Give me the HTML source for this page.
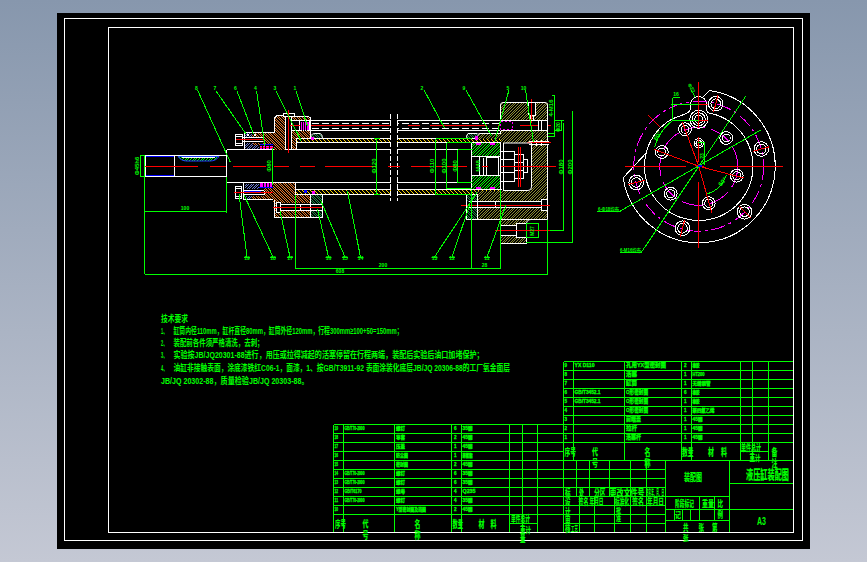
<!DOCTYPE html>
<html lang="zh"><head><meta charset="utf-8"><title>液压缸装配图</title>
<style>
html,body{margin:0;padding:0;}
body{width:867px;height:562px;overflow:hidden;background:linear-gradient(180deg,#8797ad 0%,#c4c8d4 100%);font-family:"Liberation Sans","Noto Sans CJK SC",sans-serif;}
svg{display:block;position:absolute;left:0;top:0;}
svg text{font-family:"Liberation Sans","Noto Sans CJK SC",sans-serif;}
</style></head><body>
<svg width="867" height="562" viewBox="0 0 867 562">
<defs>
<pattern id="hb" width="5" height="5" patternUnits="userSpaceOnUse"><rect width="5" height="5" fill="#000"/><path d="M0 0h1v1h-1zM2 0h1v1h-1zM1 1h1v1h-1zM3 1h1v1h-1zM2 2h1v1h-1zM4 2h1v1h-1zM0 3h1v1h-1zM3 3h1v1h-1zM1 4h1v1h-1zM4 4h1v1h-1z" fill="#e87828"/></pattern>
<pattern id="ho" width="8" height="8" patternUnits="userSpaceOnUse"><rect width="8" height="8" fill="#000"/><path d="M0 0h1v1h-1zM2 0h1v1h-1zM5 0h1v1h-1zM1 1h1v1h-1zM4 1h1v1h-1zM7 1h1v1h-1zM0 2h1v1h-1zM3 2h1v1h-1zM6 2h1v1h-1zM2 3h1v1h-1zM5 3h1v1h-1zM7 3h1v1h-1zM1 4h1v1h-1zM4 4h1v1h-1zM6 4h1v1h-1zM0 5h1v1h-1zM3 5h1v1h-1zM5 5h1v1h-1zM2 6h1v1h-1zM4 6h1v1h-1zM7 6h1v1h-1zM1 7h1v1h-1zM3 7h1v1h-1zM6 7h1v1h-1z" fill="#8c8c32"/></pattern>
<pattern id="hg" width="8" height="8" patternUnits="userSpaceOnUse"><rect width="8" height="8" fill="#000"/><path d="M0 0h1v1h-1zM2 0h1v1h-1zM5 0h1v1h-1zM1 1h1v1h-1zM4 1h1v1h-1zM7 1h1v1h-1zM0 2h1v1h-1zM3 2h1v1h-1zM6 2h1v1h-1zM2 3h1v1h-1zM5 3h1v1h-1zM7 3h1v1h-1zM1 4h1v1h-1zM4 4h1v1h-1zM6 4h1v1h-1zM0 5h1v1h-1zM3 5h1v1h-1zM5 5h1v1h-1zM2 6h1v1h-1zM4 6h1v1h-1zM7 6h1v1h-1zM1 7h1v1h-1zM3 7h1v1h-1zM6 7h1v1h-1z" fill="#00ff00"/></pattern>
<pattern id="hy" width="4" height="4" patternUnits="userSpaceOnUse"><rect width="4" height="4" fill="#000"/><path d="M0 0h1v1h-1zM1 1h1v1h-1zM2 2h1v1h-1zM3 3h1v1h-1z" fill="#ffd800"/></pattern>
<pattern id="hs" width="5" height="5" patternUnits="userSpaceOnUse"><rect width="5" height="5" fill="#000"/><path d="M0 0h1v1h-1zM2 0h1v1h-1zM1 1h1v1h-1zM4 1h1v1h-1zM0 2h1v1h-1zM3 2h1v1h-1zM2 3h1v1h-1zM4 3h1v1h-1zM1 4h1v1h-1zM3 4h1v1h-1z" fill="#6878d0"/></pattern>
<pattern id="hd" width="5" height="5" patternUnits="userSpaceOnUse"><rect width="5" height="5" fill="#000"/><path d="M0 0h1v1h-1zM2 0h1v1h-1zM1 1h1v1h-1zM3 1h1v1h-1zM2 2h1v1h-1zM4 2h1v1h-1zM0 3h1v1h-1zM3 3h1v1h-1zM1 4h1v1h-1zM4 4h1v1h-1z" fill="#208848"/></pattern>
</defs>
<g shape-rendering="crispEdges">
<rect x="57" y="13" width="753" height="536" fill="#000"/>
</g>
<g shape-rendering="crispEdges">
<rect x="145.5" y="155.5" width="81" height="21" stroke="#ffffff" fill="none" stroke-width="1" />
<line x1="174.5" y1="155.5" x2="174.5" y2="176.5" stroke="#ffffff" stroke-width="1" />
<line x1="146" y1="156.5" x2="174" y2="156.5" stroke="#0000ff" stroke-width="1" />
<line x1="146" y1="175.5" x2="174" y2="175.5" stroke="#0000ff" stroke-width="1" />
<path d="M178 156.5 Q181 161 187 161 L210 161 Q216 161 219 156.5 Z" fill="url(#hg)" stroke="#2040ff" stroke-width="1" shape-rendering="auto"/>
<line x1="182" y1="157.5" x2="215" y2="157.5" stroke="#ffffff" stroke-width="1" />
<line x1="226.5" y1="149.5" x2="471.5" y2="149.5" stroke="#ffffff" stroke-width="1" />
<line x1="226.5" y1="182.5" x2="471.5" y2="182.5" stroke="#ffffff" stroke-width="1" />
<line x1="226.5" y1="149.5" x2="226.5" y2="182.5" stroke="#ffffff" stroke-width="1" />
<rect x="296" y="139" width="206" height="3.5" fill="url(#hy)"/>
<line x1="296" y1="138.5" x2="502" y2="138.5" stroke="#ffffff" stroke-width="1" />
<line x1="296" y1="142.5" x2="502" y2="142.5" stroke="#ffffff" stroke-width="1" />
<rect x="296" y="190" width="206" height="4" fill="url(#hy)"/>
<line x1="296" y1="189.5" x2="502" y2="189.5" stroke="#ffffff" stroke-width="1" />
<line x1="296" y1="194.5" x2="502" y2="194.5" stroke="#ffffff" stroke-width="1" />
<line x1="310" y1="120.5" x2="500" y2="120.5" stroke="#ffffff" stroke-width="1" />
<line x1="310" y1="130.5" x2="500" y2="130.5" stroke="#ffffff" stroke-width="1" />
<line x1="312" y1="123.5" x2="500" y2="123.5" stroke="#ffffff" stroke-width="1" stroke-dasharray="7 3"/>
<line x1="312" y1="128.5" x2="500" y2="128.5" stroke="#ffffff" stroke-width="1" stroke-dasharray="7 3"/>
<line x1="300" y1="125.5" x2="390.5" y2="125.5" stroke="#ff0000" stroke-width="1" />
<line x1="408" y1="125.5" x2="419.5" y2="125.5" stroke="#ff0000" stroke-width="1" />
<line x1="429.5" y1="125.5" x2="487" y2="125.5" stroke="#ff0000" stroke-width="1" />
<line x1="498" y1="125.5" x2="512" y2="125.5" stroke="#ff0000" stroke-width="1" />
<line x1="519.5" y1="125.5" x2="551" y2="125.5" stroke="#ff0000" stroke-width="1" />
<rect x="245" y="133" width="29" height="16" fill="#000"/>
<rect x="245" y="133" width="6.5" height="4" fill="url(#hs)"/>
<rect x="252" y="133" width="22" height="4" fill="url(#hb)"/>
<rect x="263.5" y="133" width="10.5" height="11" fill="url(#hb)"/>
<rect x="245" y="143" width="14" height="6" fill="url(#hs)"/>
<rect x="253" y="143" width="7" height="1.5" fill="url(#hb)"/>
<rect x="247" y="134" width="2" height="2" fill="#ffffff"/>
<rect x="254" y="134" width="2" height="2" fill="#ffffff"/>
<rect x="235.5" y="134.5" width="7" height="11" stroke="#ffffff" fill="none" stroke-width="1" />
<line x1="236" y1="136.5" x2="242" y2="136.5" stroke="#ffffff" stroke-width="1" />
<line x1="236" y1="143.5" x2="242" y2="143.5" stroke="#ffffff" stroke-width="1" />
<line x1="244.5" y1="132.5" x2="274.5" y2="132.5" stroke="#ffffff" stroke-width="1" />
<line x1="244.5" y1="132.5" x2="244.5" y2="149.5" stroke="#ffffff" stroke-width="1" />
<line x1="243" y1="137.5" x2="263" y2="137.5" stroke="#ffffff" stroke-width="1" />
<line x1="243" y1="141.5" x2="263" y2="141.5" stroke="#ffffff" stroke-width="1" />
<line x1="263.5" y1="137.5" x2="263.5" y2="141.5" stroke="#ffffff" stroke-width="1" />
<line x1="259.5" y1="144.5" x2="273" y2="144.5" stroke="#0000ff" stroke-width="1" />
<rect x="259.5" y="145.5" width="13.5" height="3.5" fill="#ff00ff"/>
<line x1="259.5" y1="147.5" x2="273" y2="147.5" stroke="#ff0000" stroke-width="1" />
<line x1="262.5" y1="145.5" x2="262.5" y2="149" stroke="#000" stroke-width="1" />
<line x1="265.5" y1="145.5" x2="265.5" y2="149" stroke="#000" stroke-width="1" />
<line x1="269.5" y1="145.5" x2="269.5" y2="149" stroke="#000" stroke-width="1" />
<line x1="236" y1="139.5" x2="264" y2="139.5" stroke="#ff0000" stroke-width="1" />
<line x1="266.5" y1="139.5" x2="273.5" y2="139.5" stroke="#ff0000" stroke-width="1" />
<path d="M262.5 132.5 L274.5 132.5 L274.5 118 L277 115.5 L285.5 115.5 L285.5 149.5 L273.5 149.5 L273.5 143.5 L262.5 143.5 Z" stroke="none" fill="url(#hb)" stroke-width="1" />
<path d="M274.5 132.5 L274.5 118 L277 115.5 L285.5 115.5 L285.5 149.5" stroke="#ffffff" fill="none" stroke-width="1" />
<path d="M291.5 149.5 L291.5 116 L308 116 L310.5 118 L310.5 138.5 L296.5 138.5 L296.5 149.5 Z" stroke="#ffffff" fill="url(#hb)" stroke-width="1" />
<rect x="292" y="121" width="18" height="9.5" fill="#000"/>
<line x1="291.5" y1="120.5" x2="310.5" y2="120.5" stroke="#ffffff" stroke-width="1" />
<line x1="291.5" y1="130.5" x2="310.5" y2="130.5" stroke="#ffffff" stroke-width="1" />
<rect x="283.5" y="113.5" width="11" height="3" stroke="#ffffff" fill="#000" stroke-width="1" />
<rect x="300.5" y="121.5" width="8.5" height="8.5" fill="#ff00ff"/>
<line x1="302.5" y1="121" x2="302.5" y2="130.5" stroke="#000" stroke-width="1" />
<line x1="304.5" y1="121" x2="304.5" y2="130.5" stroke="#000" stroke-width="1" />
<line x1="306.5" y1="121" x2="306.5" y2="130.5" stroke="#000" stroke-width="1" />
<line x1="299.5" y1="120.5" x2="299.5" y2="130.5" stroke="#ffffff" stroke-width="1" />
<line x1="309.5" y1="120.5" x2="309.5" y2="130.5" stroke="#ffffff" stroke-width="1" />
<line x1="288.5" y1="110" x2="288.5" y2="153" stroke="#ff0000" stroke-width="1" />
<line x1="290" y1="125.5" x2="300" y2="125.5" stroke="#ff0000" stroke-width="1" />
<path d="M311 138.5 L311 135.5 Q312 133.5 315 133.5 L320 133.5 Q322.5 134 322.5 138.5 Z" fill="url(#hd)" stroke="#fff" stroke-width="1" shape-rendering="auto"/>
<rect x="311" y="137" width="3" height="3" fill="#ff00ff"/>
<rect x="244" y="183" width="29" height="17" fill="#000"/>
<rect x="245" y="183.5" width="14" height="5" fill="url(#hs)"/>
<rect x="264" y="186.5" width="9" height="13.5" fill="url(#hb)"/>
<rect x="245" y="195.5" width="6.5" height="4" fill="url(#hs)"/>
<rect x="252" y="195.5" width="21" height="4.5" fill="url(#hb)"/>
<rect x="235.5" y="186.5" width="6" height="12" stroke="#ffffff" fill="none" stroke-width="1" />
<line x1="236" y1="188.5" x2="241" y2="188.5" stroke="#ffffff" stroke-width="1" />
<line x1="236" y1="196.5" x2="241" y2="196.5" stroke="#ffffff" stroke-width="1" />
<line x1="243.5" y1="182.5" x2="243.5" y2="199.5" stroke="#ffffff" stroke-width="1" />
<line x1="243.5" y1="199.5" x2="295" y2="199.5" stroke="#ffffff" stroke-width="1" />
<line x1="244" y1="190.5" x2="264" y2="190.5" stroke="#ffffff" stroke-width="1" />
<line x1="244" y1="194.5" x2="264" y2="194.5" stroke="#ffffff" stroke-width="1" />
<line x1="264.5" y1="190.5" x2="264.5" y2="194.5" stroke="#ffffff" stroke-width="1" />
<line x1="244" y1="191.5" x2="261" y2="191.5" stroke="#0000ff" stroke-width="1" />
<rect x="260" y="183" width="12" height="3.5" fill="#ff00ff"/>
<line x1="263.5" y1="183" x2="263.5" y2="186.5" stroke="#000" stroke-width="1" />
<line x1="266.5" y1="183" x2="266.5" y2="186.5" stroke="#000" stroke-width="1" />
<line x1="269.5" y1="183" x2="269.5" y2="186.5" stroke="#000" stroke-width="1" />
<line x1="258.5" y1="187.5" x2="273" y2="187.5" stroke="#0000ff" stroke-width="1" />
<line x1="234" y1="192.5" x2="283" y2="192.5" stroke="#ff0000" stroke-width="1" />
<rect x="273" y="183" width="22.5" height="19.5" fill="url(#hb)"/>
<rect x="295.5" y="195" width="15" height="7.5" fill="url(#hb)"/>
<rect x="275" y="202.5" width="35.5" height="15" fill="url(#hb)"/>
<rect x="276" y="203" width="45" height="8" fill="#000"/>
<rect x="276.5" y="202.5" width="4" height="10" stroke="#ffffff" fill="#000" stroke-width="1" />
<line x1="280.5" y1="204.5" x2="321" y2="204.5" stroke="#ffffff" stroke-width="1" />
<line x1="280.5" y1="210.5" x2="321" y2="210.5" stroke="#ffffff" stroke-width="1" />
<line x1="300.5" y1="204.5" x2="300.5" y2="210.5" stroke="#ffffff" stroke-width="1" />
<line x1="273" y1="207.5" x2="322" y2="207.5" stroke="#ff0000" stroke-width="1" />
<line x1="274.5" y1="199.5" x2="274.5" y2="217.5" stroke="#ffffff" stroke-width="1" />
<line x1="274.5" y1="217.5" x2="322.5" y2="217.5" stroke="#ffffff" stroke-width="1" />
<line x1="295.5" y1="182.5" x2="295.5" y2="195" stroke="#ffffff" stroke-width="1" />
<rect x="311" y="195" width="11" height="22" fill="url(#hd)"/>
<rect x="311" y="204" width="11" height="7" fill="#000"/>
<line x1="311" y1="204.5" x2="322" y2="204.5" stroke="#ffffff" stroke-width="1" />
<line x1="311" y1="210.5" x2="322" y2="210.5" stroke="#ffffff" stroke-width="1" />
<rect x="310.5" y="194.5" width="12" height="23" stroke="#ffffff" fill="none" stroke-width="1" />
<rect x="303.5" y="190" width="3" height="3" fill="#0000ff"/>
<rect x="312" y="190.5" width="3" height="3.5" fill="#ff00ff"/>
<line x1="273" y1="207.5" x2="322" y2="207.5" stroke="#ff0000" stroke-width="1" />
<rect x="472" y="143" width="28" height="13.5" fill="url(#hg)"/>
<rect x="472" y="176" width="28" height="13" fill="url(#hg)"/>
<line x1="471.5" y1="142.5" x2="471.5" y2="189.5" stroke="#ffffff" stroke-width="1" />
<line x1="500.5" y1="142.5" x2="500.5" y2="189.5" stroke="#ffffff" stroke-width="1" />
<line x1="503.5" y1="143" x2="503.5" y2="190.5" stroke="#ffffff" stroke-width="1" />
<line x1="471.5" y1="156.5" x2="500.5" y2="156.5" stroke="#ffffff" stroke-width="1" />
<line x1="471.5" y1="175.5" x2="500.5" y2="175.5" stroke="#ffffff" stroke-width="1" />
<rect x="486.5" y="157.5" width="12" height="18" stroke="#ffffff" fill="none" stroke-width="1" />
<line x1="483.5" y1="157.5" x2="483.5" y2="175.5" stroke="#ffffff" stroke-width="1" />
<line x1="479.5" y1="156.5" x2="479.5" y2="175.5" stroke="#ffffff" stroke-width="1" />
<line x1="476" y1="143.5" x2="481" y2="143.5" stroke="#ff00ff" stroke-width="1" />
<line x1="476" y1="144.5" x2="481" y2="144.5" stroke="#ff00ff" stroke-width="1" />
<line x1="476" y1="187.5" x2="481" y2="187.5" stroke="#ff00ff" stroke-width="1" />
<line x1="476" y1="188.5" x2="481" y2="188.5" stroke="#ff00ff" stroke-width="1" />
<line x1="490" y1="143.5" x2="495" y2="143.5" stroke="#ff00ff" stroke-width="1" />
<line x1="490" y1="144.5" x2="495" y2="144.5" stroke="#ff00ff" stroke-width="1" />
<line x1="490" y1="187.5" x2="495" y2="187.5" stroke="#ff00ff" stroke-width="1" />
<line x1="490" y1="188.5" x2="495" y2="188.5" stroke="#ff00ff" stroke-width="1" />
<rect x="486" y="190.5" width="3" height="2.5" fill="#ff00ff"/>
<rect x="500.5" y="102.5" width="47" height="18" fill="url(#ho)"/>
<rect x="500.5" y="130.5" width="47" height="12.5" fill="url(#ho)"/>
<rect x="478" y="133.5" width="22.5" height="5" fill="url(#ho)"/>
<rect x="531" y="143" width="16.5" height="47.5" fill="url(#ho)"/>
<rect x="477" y="190.5" width="70.5" height="11.5" fill="url(#ho)"/>
<rect x="477" y="207.5" width="70.5" height="12" fill="url(#ho)"/>
<rect x="466" y="195" width="11" height="24.5" fill="url(#hd)"/>
<rect x="466" y="202" width="11" height="6" fill="#000"/>
<rect x="500.5" y="219.5" width="26.5" height="23.5" fill="url(#ho)"/>
<rect x="504" y="143" width="27" height="47.5" fill="#000"/>
<rect x="528.5" y="102.5" width="6.5" height="12.5" fill="#000"/>
<line x1="528.5" y1="102.5" x2="528.5" y2="115" stroke="#ffffff" stroke-width="1" />
<line x1="535.5" y1="102.5" x2="535.5" y2="115" stroke="#ffffff" stroke-width="1" />
<line x1="528.5" y1="115.5" x2="535.5" y2="115.5" stroke="#ffffff" stroke-width="1" />
<line x1="530.5" y1="115" x2="530.5" y2="120" stroke="#ffffff" stroke-width="1" />
<line x1="533.5" y1="115" x2="533.5" y2="120" stroke="#ffffff" stroke-width="1" />
<line x1="531.5" y1="98.5" x2="531.5" y2="122.5" stroke="#ff0000" stroke-width="1" />
<path d="M500.5 120.5 L500.5 105 Q500.5 102.5 503 102.5 L545 102.5 Q547.5 102.5 547.5 105 L547.5 219.5 L466.5 219.5" fill="none" stroke="#fff" stroke-width="1" shape-rendering="auto"/>
<line x1="500.5" y1="120.5" x2="547.5" y2="120.5" stroke="#ffffff" stroke-width="1" />
<line x1="500.5" y1="130.5" x2="547.5" y2="130.5" stroke="#ffffff" stroke-width="1" />
<rect x="538.5" y="120.5" width="9" height="10" stroke="#ffffff" fill="#000" stroke-width="1" />
<line x1="541.5" y1="120.5" x2="541.5" y2="130.5" stroke="#ffffff" stroke-width="1" />
<rect x="500.5" y="121.5" width="12" height="8" fill="#000"/>
<rect x="500.5" y="121.5" width="12" height="8" stroke="#ff00ff" fill="none" stroke-width="1" stroke-dasharray="2 2"/>
<path d="M500.5 133.5 L480 133.5 Q477.5 133.5 477.5 136 L477.5 138.5" fill="none" stroke="#fff" stroke-width="1" shape-rendering="auto"/>
<line x1="500.5" y1="130.5" x2="500.5" y2="133.5" stroke="#ffffff" stroke-width="1" />
<path d="M477.5 138.5 L467 138.5 Q465.5 136 468 133.5 L477.5 133.5" fill="url(#hd)" stroke="#fff" stroke-width="1" shape-rendering="auto"/>
<rect x="475" y="136" width="3" height="4" fill="#ff00ff"/>
<rect x="529" y="141" width="19" height="3.5" fill="#000"/>
<line x1="529" y1="141.5" x2="548.5" y2="141.5" stroke="#ffffff" stroke-width="1" />
<line x1="529" y1="144.5" x2="548.5" y2="144.5" stroke="#ffffff" stroke-width="1" />
<line x1="536.5" y1="139.5" x2="536.5" y2="146" stroke="#ffffff" stroke-width="1" />
<line x1="541.5" y1="139.5" x2="541.5" y2="146" stroke="#ffffff" stroke-width="1" />
<line x1="527" y1="142.5" x2="551" y2="142.5" stroke="#ff0000" stroke-width="1" />
<path d="M503.5 143 L531.5 143 L531.5 187 Q531.5 190.5 528 190.5 L503.5 190.5" fill="none" stroke="#fff" stroke-width="1" shape-rendering="auto"/>
<rect x="500.5" y="151.5" width="14" height="30" stroke="#ffffff" fill="none" stroke-width="1" />
<line x1="500.5" y1="159.5" x2="514.5" y2="159.5" stroke="#ffffff" stroke-width="1" />
<line x1="500.5" y1="172.5" x2="514.5" y2="172.5" stroke="#ffffff" stroke-width="1" />
<rect x="514.5" y="154.5" width="9" height="24" stroke="#ffffff" fill="none" stroke-width="1" />
<line x1="514.5" y1="162.5" x2="523.5" y2="162.5" stroke="#ffffff" stroke-width="1" />
<line x1="514.5" y1="170.5" x2="523.5" y2="170.5" stroke="#ffffff" stroke-width="1" />
<rect x="523.5" y="159.5" width="4" height="13" stroke="#ffffff" fill="none" stroke-width="1" />
<line x1="518.5" y1="147" x2="518.5" y2="187" stroke="#ff0000" stroke-width="1" />
<line x1="520.5" y1="147" x2="520.5" y2="187" stroke="#ff0000" stroke-width="1" />
<rect x="469" y="202" width="78" height="6" fill="#000"/>
<line x1="469" y1="201.5" x2="547.5" y2="201.5" stroke="#ffffff" stroke-width="1" />
<line x1="469" y1="207.5" x2="547.5" y2="207.5" stroke="#ffffff" stroke-width="1" />
<line x1="495.5" y1="201.5" x2="495.5" y2="207.5" stroke="#ffffff" stroke-width="1" />
<rect x="541.5" y="199.5" width="6" height="11" stroke="#ffffff" fill="#000" stroke-width="1" />
<line x1="461" y1="205.5" x2="549.5" y2="205.5" stroke="#ff0000" stroke-width="1" />
<line x1="466.5" y1="195" x2="466.5" y2="219.5" stroke="#ffffff" stroke-width="1" />
<line x1="466.5" y1="194.5" x2="477.5" y2="194.5" stroke="#ffffff" stroke-width="1" />
<line x1="477.5" y1="194.5" x2="477.5" y2="219.5" stroke="#ffffff" stroke-width="1" />
<rect x="501" y="225.5" width="26" height="10" fill="#000"/>
<line x1="500.5" y1="225.5" x2="516.5" y2="225.5" stroke="#ffffff" stroke-width="1" />
<line x1="500.5" y1="235.5" x2="516.5" y2="235.5" stroke="#ffffff" stroke-width="1" />
<line x1="500.5" y1="219.5" x2="500.5" y2="243.5" stroke="#ffffff" stroke-width="1" />
<line x1="500.5" y1="243.5" x2="527" y2="243.5" stroke="#ffffff" stroke-width="1" />
<rect x="516.5" y="223.5" width="10" height="14" stroke="#ffffff" fill="#000" stroke-width="1" />
<path d="M526.5 243.5 L526.5 224 Q526.5 219.5 531 219.5" fill="none" stroke="#fff" stroke-width="1" shape-rendering="auto"/>
<rect x="526.5" y="223.5" width="12" height="14" stroke="#00ff00" fill="none" stroke-width="1" />
<line x1="494.5" y1="230.5" x2="549.5" y2="230.5" stroke="#ff0000" stroke-width="1" />
<rect x="391" y="113" width="6" height="89" fill="#000"/>
<line x1="390.5" y1="114" x2="390.5" y2="201" stroke="#ffffff" stroke-width="1" stroke-dasharray="5 2"/>
<line x1="397.5" y1="114" x2="397.5" y2="201" stroke="#ffffff" stroke-width="1" stroke-dasharray="5 2"/>
<line x1="145" y1="166.5" x2="197.5" y2="166.5" stroke="#ff0000" stroke-width="1" />
<line x1="210" y1="166.5" x2="226" y2="166.5" stroke="#ff0000" stroke-width="1" />
<line x1="232.5" y1="166.5" x2="266" y2="166.5" stroke="#ff0000" stroke-width="1" />
<line x1="274" y1="166.5" x2="289" y2="166.5" stroke="#ff0000" stroke-width="1" />
<line x1="300" y1="166.5" x2="315" y2="166.5" stroke="#ff0000" stroke-width="1" />
<line x1="325" y1="166.5" x2="377" y2="166.5" stroke="#ff0000" stroke-width="1" />
<line x1="388" y1="166.5" x2="399.5" y2="166.5" stroke="#ff0000" stroke-width="1" />
<line x1="411" y1="166.5" x2="429.5" y2="166.5" stroke="#ff0000" stroke-width="1" />
<line x1="434.5" y1="166.5" x2="467" y2="166.5" stroke="#ff0000" stroke-width="1" />
<line x1="482" y1="166.5" x2="488" y2="166.5" stroke="#ff0000" stroke-width="1" />
<line x1="500.5" y1="166.5" x2="556" y2="166.5" stroke="#ff0000" stroke-width="1" />
</g>
<g shape-rendering="crispEdges">
<line x1="144.5" y1="155.5" x2="144.5" y2="274" stroke="#00ff00" stroke-width="1" />
<line x1="140" y1="155.5" x2="145" y2="155.5" stroke="#00ff00" stroke-width="1" />
<line x1="140.5" y1="155.5" x2="140.5" y2="176.5" stroke="#00ff00" stroke-width="1" />
<line x1="140" y1="176.5" x2="145" y2="176.5" stroke="#00ff00" stroke-width="1" />
<line x1="226.5" y1="176.5" x2="226.5" y2="212.5" stroke="#00ff00" stroke-width="1" />
<line x1="144.5" y1="211.5" x2="226.5" y2="211.5" stroke="#00ff00" stroke-width="1" />
<line x1="144.5" y1="274.5" x2="547.5" y2="274.5" stroke="#00ff00" stroke-width="1" />
<line x1="547.5" y1="219.5" x2="547.5" y2="275" stroke="#00ff00" stroke-width="1" />
<line x1="295.5" y1="194.5" x2="295.5" y2="269" stroke="#00ff00" stroke-width="1" />
<line x1="295.5" y1="268.5" x2="500.5" y2="268.5" stroke="#00ff00" stroke-width="1" />
<line x1="471.5" y1="190" x2="471.5" y2="269" stroke="#00ff00" stroke-width="1" />
<line x1="500.5" y1="190" x2="500.5" y2="269" stroke="#00ff00" stroke-width="1" />
<line x1="272.5" y1="147.5" x2="272.5" y2="185" stroke="#00ff00" stroke-width="1" />
<line x1="376.5" y1="138.5" x2="376.5" y2="194.5" stroke="#00ff00" stroke-width="1" />
<line x1="374" y1="138.5" x2="380" y2="138.5" stroke="#00ff00" stroke-width="1" />
<line x1="374" y1="194.5" x2="380" y2="194.5" stroke="#00ff00" stroke-width="1" />
<line x1="435.5" y1="138.5" x2="435.5" y2="194.5" stroke="#00ff00" stroke-width="1" />
<line x1="435.5" y1="138.5" x2="472" y2="138.5" stroke="#00ff00" stroke-width="1" />
<line x1="435.5" y1="194.5" x2="472" y2="194.5" stroke="#00ff00" stroke-width="1" />
<line x1="446.5" y1="142.5" x2="446.5" y2="188.5" stroke="#00ff00" stroke-width="1" />
<line x1="446.5" y1="142.5" x2="472" y2="142.5" stroke="#00ff00" stroke-width="1" />
<line x1="446.5" y1="188.5" x2="472" y2="188.5" stroke="#00ff00" stroke-width="1" />
<line x1="457.5" y1="149.5" x2="457.5" y2="182.5" stroke="#00ff00" stroke-width="1" />
<line x1="457.5" y1="149.5" x2="472" y2="149.5" stroke="#00ff00" stroke-width="1" />
<line x1="457.5" y1="182.5" x2="472" y2="182.5" stroke="#00ff00" stroke-width="1" />
<line x1="554.5" y1="95" x2="554.5" y2="137" stroke="#00ff00" stroke-width="1" />
<line x1="552" y1="95.5" x2="555" y2="95.5" stroke="#00ff00" stroke-width="1" />
<line x1="548" y1="136.5" x2="555" y2="136.5" stroke="#00ff00" stroke-width="1" />
<line x1="563.5" y1="122.5" x2="563.5" y2="230.5" stroke="#00ff00" stroke-width="1" />
<line x1="549.5" y1="230.5" x2="563.5" y2="230.5" stroke="#00ff00" stroke-width="1" />
<line x1="554.5" y1="120.5" x2="564" y2="120.5" stroke="#00ff00" stroke-width="1" />
<line x1="572.5" y1="111" x2="572.5" y2="242.5" stroke="#00ff00" stroke-width="1" />
<line x1="525.5" y1="242.5" x2="572.5" y2="242.5" stroke="#00ff00" stroke-width="1" />
<rect x="554.5" y="120.5" width="7" height="10" stroke="#00ff00" fill="none" stroke-width="1" />
<line x1="548" y1="133.5" x2="555" y2="133.5" stroke="#00ff00" stroke-width="1" />
</g>
<line x1="197.5" y1="90" x2="230.5" y2="162.5" stroke="#00ff00" stroke-width="1" shape-rendering="crispEdges"/>
<line x1="216" y1="91" x2="246" y2="134" stroke="#00ff00" stroke-width="1" shape-rendering="crispEdges"/>
<line x1="237" y1="91" x2="253.5" y2="134" stroke="#00ff00" stroke-width="1" shape-rendering="crispEdges"/>
<line x1="256.5" y1="91" x2="265" y2="146" stroke="#00ff00" stroke-width="1" shape-rendering="crispEdges"/>
<line x1="276" y1="91" x2="301" y2="140.5" stroke="#00ff00" stroke-width="1" shape-rendering="crispEdges"/>
<line x1="296" y1="91" x2="307.5" y2="126" stroke="#00ff00" stroke-width="1" shape-rendering="crispEdges"/>
<line x1="424" y1="90" x2="444.5" y2="128" stroke="#00ff00" stroke-width="1" shape-rendering="crispEdges"/>
<line x1="466" y1="90" x2="491.5" y2="136" stroke="#00ff00" stroke-width="1" shape-rendering="crispEdges"/>
<line x1="509" y1="90" x2="494.5" y2="142.5" stroke="#00ff00" stroke-width="1" shape-rendering="crispEdges"/>
<line x1="525.5" y1="90" x2="533.5" y2="142" stroke="#00ff00" stroke-width="1" shape-rendering="crispEdges"/>
<line x1="247" y1="257" x2="239" y2="194" stroke="#00ff00" stroke-width="1" shape-rendering="crispEdges"/>
<line x1="273" y1="257" x2="244" y2="195" stroke="#00ff00" stroke-width="1" shape-rendering="crispEdges"/>
<line x1="290" y1="257" x2="280" y2="211" stroke="#00ff00" stroke-width="1" shape-rendering="crispEdges"/>
<line x1="328.5" y1="257" x2="317.5" y2="209" stroke="#00ff00" stroke-width="1" shape-rendering="crispEdges"/>
<line x1="345" y1="257" x2="320.5" y2="200" stroke="#00ff00" stroke-width="1" shape-rendering="crispEdges"/>
<line x1="360.5" y1="257" x2="347.5" y2="191.5" stroke="#00ff00" stroke-width="1" shape-rendering="crispEdges"/>
<line x1="434.5" y1="257" x2="477" y2="192.5" stroke="#00ff00" stroke-width="1" shape-rendering="crispEdges"/>
<line x1="452" y1="257" x2="470" y2="204" stroke="#00ff00" stroke-width="1" shape-rendering="crispEdges"/>
<line x1="487" y1="257" x2="506" y2="205" stroke="#00ff00" stroke-width="1" shape-rendering="crispEdges"/>
<text x="196.5" y="90" font-size="5" fill="#00ff00" text-anchor="middle" font-weight="bold" >8</text>
<text x="215" y="90" font-size="5" fill="#00ff00" text-anchor="middle" font-weight="bold" >7</text>
<text x="235.5" y="90" font-size="5" fill="#00ff00" text-anchor="middle" font-weight="bold" >6</text>
<text x="255.5" y="90" font-size="5" fill="#00ff00" text-anchor="middle" font-weight="bold" >4</text>
<text x="275" y="90" font-size="5" fill="#00ff00" text-anchor="middle" font-weight="bold" >3</text>
<text x="295" y="90" font-size="5" fill="#00ff00" text-anchor="middle" font-weight="bold" >1</text>
<text x="422" y="90" font-size="5" fill="#00ff00" text-anchor="middle" font-weight="bold" >2</text>
<text x="464" y="90" font-size="5" fill="#00ff00" text-anchor="middle" font-weight="bold" >9</text>
<text x="508" y="90" font-size="5" fill="#00ff00" text-anchor="middle" font-weight="bold" >5</text>
<text x="523.5" y="90" font-size="5" fill="#00ff00" text-anchor="middle" font-weight="bold" >10</text>
<text x="247" y="260" font-size="5" fill="#00ff00" text-anchor="middle" font-weight="bold" >19</text>
<line x1="244" y1="257.5" x2="250" y2="257.5" stroke="#00ff00" stroke-width="1" />
<text x="273" y="260" font-size="5" fill="#00ff00" text-anchor="middle" font-weight="bold" >18</text>
<line x1="270" y1="257.5" x2="276" y2="257.5" stroke="#00ff00" stroke-width="1" />
<text x="290" y="260" font-size="5" fill="#00ff00" text-anchor="middle" font-weight="bold" >17</text>
<line x1="287" y1="257.5" x2="293" y2="257.5" stroke="#00ff00" stroke-width="1" />
<text x="328.5" y="260" font-size="5" fill="#00ff00" text-anchor="middle" font-weight="bold" >16</text>
<line x1="325.5" y1="257.5" x2="331.5" y2="257.5" stroke="#00ff00" stroke-width="1" />
<text x="345" y="260" font-size="5" fill="#00ff00" text-anchor="middle" font-weight="bold" >15</text>
<line x1="342" y1="257.5" x2="348" y2="257.5" stroke="#00ff00" stroke-width="1" />
<text x="360.5" y="260" font-size="5" fill="#00ff00" text-anchor="middle" font-weight="bold" >14</text>
<line x1="357.5" y1="257.5" x2="363.5" y2="257.5" stroke="#00ff00" stroke-width="1" />
<text x="434.5" y="260" font-size="5" fill="#00ff00" text-anchor="middle" font-weight="bold" >13</text>
<line x1="431.5" y1="257.5" x2="437.5" y2="257.5" stroke="#00ff00" stroke-width="1" />
<text x="452" y="260" font-size="5" fill="#00ff00" text-anchor="middle" font-weight="bold" >12</text>
<line x1="449" y1="257.5" x2="455" y2="257.5" stroke="#00ff00" stroke-width="1" />
<text x="487" y="260" font-size="5" fill="#00ff00" text-anchor="middle" font-weight="bold" >11</text>
<line x1="484" y1="257.5" x2="490" y2="257.5" stroke="#00ff00" stroke-width="1" />
<text x="185" y="210" font-size="5" fill="#00ff00" text-anchor="middle" font-weight="bold" >100</text>
<text x="383" y="267" font-size="5" fill="#00ff00" text-anchor="middle" font-weight="bold" >200</text>
<text x="484.5" y="267" font-size="5" fill="#00ff00" text-anchor="middle" font-weight="bold" >28</text>
<text x="340" y="273" font-size="5" fill="#00ff00" text-anchor="middle" font-weight="bold" >608</text>
<text transform="translate(139 166) rotate(-90)" font-size="6" fill="#00ff00" text-anchor="middle" font-weight="bold">Φ45h6</text>
<text transform="translate(271 166) rotate(-90)" font-size="6" fill="#00ff00" text-anchor="middle" font-weight="bold">Φ80</text>
<text transform="translate(375.5 166) rotate(-90)" font-size="6" fill="#00ff00" text-anchor="middle" font-weight="bold">Φ120</text>
<text transform="translate(434 166) rotate(-90)" font-size="6" fill="#00ff00" text-anchor="middle" font-weight="bold">Φ110</text>
<text transform="translate(445.5 166) rotate(-90)" font-size="6" fill="#00ff00" text-anchor="middle" font-weight="bold">Φ100</text>
<text transform="translate(456.5 166) rotate(-90)" font-size="6" fill="#00ff00" text-anchor="middle" font-weight="bold">Φ80</text>
<text transform="translate(480 166) rotate(-90)" font-size="6" fill="#00ff00" text-anchor="middle" font-weight="bold">M48</text>
<text transform="translate(553 108) rotate(-90)" font-size="6" fill="#00ff00" text-anchor="middle" font-weight="bold">4-M16</text>
<text transform="translate(560 127) rotate(-90)" font-size="5" fill="#00ff00" text-anchor="middle" font-weight="bold">Φ20</text>
<text transform="translate(562.5 167) rotate(-90)" font-size="6" fill="#00ff00" text-anchor="middle" font-weight="bold">Φ180</text>
<text transform="translate(571.5 167) rotate(-90)" font-size="6" fill="#00ff00" text-anchor="middle" font-weight="bold">Φ200</text>
<text transform="translate(534 231) rotate(-90)" font-size="5" fill="#00ff00" text-anchor="middle" font-weight="bold">M27</text>
<g fill="none" shape-rendering="crispEdges">
<path d="M703.2 96.7 L709.53 90.51 A76.5 76.5 0 1 1 623.13 177.82 L645.5 153.7" stroke="#fff" stroke-width="1"/>
<path d="M709.67 113.06 A54.3 54.3 0 1 1 672.42 118.76" stroke="#fff" stroke-width="1"/>
<path d="M672.42 118.76 L686.5 113.5 Q690.6 111.5 690.6 107 L690.6 104.5 A8 8 0 0 1 706.6 104.5 L706.6 109 Q706.6 113.2 709.67 113.06" stroke="#fff" stroke-width="1"/>
<circle cx="698.75" cy="166.25" r="65" stroke="#ff00ff" fill="none" stroke-width="1" stroke-dasharray="14 4 3 4"/>
<circle cx="698.75" cy="166.25" r="39" stroke="#ff00ff" fill="none" stroke-width="1" stroke-dasharray="22 6"/>
<circle cx="715.75" cy="103.75" r="7.3" stroke="#ffffff" fill="none" stroke-width="1" />
<circle cx="715.75" cy="103.75" r="4.8" stroke="#ffffff" fill="none" stroke-width="1" />
<line x1="713.52" y1="111.95" x2="717.98" y2="95.55" stroke="#ff0000" stroke-width="1" />
<circle cx="761.25" cy="149" r="7.3" stroke="#ffffff" fill="none" stroke-width="1" />
<circle cx="761.25" cy="149" r="4.8" stroke="#ffffff" fill="none" stroke-width="1" />
<line x1="753.06" y1="151.26" x2="769.44" y2="146.74" stroke="#ff0000" stroke-width="1" />
<circle cx="744.5" cy="211.75" r="7.3" stroke="#ffffff" fill="none" stroke-width="1" />
<circle cx="744.5" cy="211.75" r="4.8" stroke="#ffffff" fill="none" stroke-width="1" />
<line x1="738.47" y1="205.76" x2="750.53" y2="217.74" stroke="#ff0000" stroke-width="1" />
<circle cx="682.5" cy="228.25" r="7.3" stroke="#ffffff" fill="none" stroke-width="1" />
<circle cx="682.5" cy="228.25" r="4.8" stroke="#ffffff" fill="none" stroke-width="1" />
<line x1="684.66" y1="220.03" x2="680.34" y2="236.47" stroke="#ff0000" stroke-width="1" />
<circle cx="636.25" cy="182.5" r="7.3" stroke="#ffffff" fill="none" stroke-width="1" />
<circle cx="636.25" cy="182.5" r="4.8" stroke="#ffffff" fill="none" stroke-width="1" />
<line x1="644.48" y1="180.36" x2="628.02" y2="184.64" stroke="#ff0000" stroke-width="1" />
<circle cx="685" cy="129.25" r="6.4" stroke="#ffffff" fill="none" stroke-width="1" />
<circle cx="685" cy="129.25" r="4" stroke="#ffffff" fill="none" stroke-width="1" />
<circle cx="726.25" cy="138" r="6.4" stroke="#ffffff" fill="none" stroke-width="1" />
<circle cx="726.25" cy="138" r="4" stroke="#ffffff" fill="none" stroke-width="1" />
<circle cx="736.75" cy="175.75" r="6.4" stroke="#ffffff" fill="none" stroke-width="1" />
<circle cx="736.75" cy="175.75" r="4" stroke="#ffffff" fill="none" stroke-width="1" />
<circle cx="708.75" cy="203.25" r="6.4" stroke="#ffffff" fill="none" stroke-width="1" />
<circle cx="708.75" cy="203.25" r="4" stroke="#ffffff" fill="none" stroke-width="1" />
<circle cx="670.75" cy="193.75" r="6.4" stroke="#ffffff" fill="none" stroke-width="1" />
<circle cx="670.75" cy="193.75" r="4" stroke="#ffffff" fill="none" stroke-width="1" />
<circle cx="661.75" cy="152" r="6.4" stroke="#ffffff" fill="none" stroke-width="1" />
<circle cx="661.75" cy="152" r="4" stroke="#ffffff" fill="none" stroke-width="1" />
<circle cx="698.75" cy="119.25" r="9" stroke="#ffffff" fill="none" stroke-width="1" />
<circle cx="698.75" cy="119.25" r="6.5" stroke="#ffffff" fill="none" stroke-width="1" />
<circle cx="698.75" cy="119.25" r="4" stroke="#ffffff" fill="none" stroke-width="1" />
<circle cx="698.75" cy="143.25" r="4.6" stroke="#ffffff" fill="none" stroke-width="1" />
<circle cx="698.75" cy="143.25" r="2.8" stroke="#ffffff" fill="none" stroke-width="1" />
<line x1="625" y1="166.25" x2="686" y2="166.25" stroke="#ff0000" stroke-width="1" />
<line x1="696" y1="166.25" x2="704" y2="166.25" stroke="#ff0000" stroke-width="1" />
<line x1="720" y1="166.25" x2="782.5" y2="166.25" stroke="#ff0000" stroke-width="1" />
<line x1="698.75" y1="82" x2="698.75" y2="128" stroke="#ff0000" stroke-width="1" />
<line x1="698.75" y1="137" x2="698.75" y2="162" stroke="#ff0000" stroke-width="1" />
<line x1="698.75" y1="182" x2="698.75" y2="247.5" stroke="#ff0000" stroke-width="1" />
<line x1="689" y1="120.5" x2="708" y2="120.5" stroke="#ff0000" stroke-width="1" />
<line x1="699" y1="104.5" x2="708" y2="104.5" stroke="#ff0000" stroke-width="1" />
<line x1="698.75" y1="166.25" x2="654.5" y2="149.5" stroke="#ff0000" stroke-width="1" />
<line x1="698.75" y1="166.25" x2="682.5" y2="122.5" stroke="#ff0000" stroke-width="1" />
<line x1="698.75" y1="166.25" x2="743.75" y2="178" stroke="#ff0000" stroke-width="1" />
<line x1="698.75" y1="166.25" x2="711.75" y2="212.5" stroke="#ff0000" stroke-width="1" />
<line x1="648" y1="115" x2="660" y2="127" stroke="#ff0000" stroke-width="1" />
<line x1="745.75" y1="96.25" x2="641.25" y2="252.5" stroke="#00ff00" stroke-width="1" />
<line x1="619.5" y1="252.5" x2="641.25" y2="252.5" stroke="#00ff00" stroke-width="1" />
<line x1="760.75" y1="130" x2="620" y2="211.25" stroke="#00ff00" stroke-width="1" />
<line x1="597" y1="211.25" x2="620" y2="211.25" stroke="#00ff00" stroke-width="1" />
<path d="M654.6 147.4 A50 50 0 0 1 672.6 120.4" stroke="#00ff00" stroke-width="1"/>
<path d="M726.33 175.21 A29 29 0 0 1 706.74 194.13" stroke="#00ff00" stroke-width="1"/>
<line x1="672.5" y1="97.5" x2="672.5" y2="121" stroke="#00ff00" stroke-width="1" />
<line x1="671" y1="104.5" x2="699" y2="104.5" stroke="#00ff00" stroke-width="1" />
<line x1="672.5" y1="120.5" x2="699" y2="120.5" stroke="#00ff00" stroke-width="1" />
<line x1="672.5" y1="97.5" x2="680" y2="97.5" stroke="#00ff00" stroke-width="1" />
<line x1="691" y1="90" x2="695.5" y2="97.5" stroke="#00ff00" stroke-width="1" />
<line x1="704.5" y1="142.5" x2="704.5" y2="165" stroke="#00ff00" stroke-width="1" />
<line x1="698" y1="142.5" x2="705" y2="142.5" stroke="#00ff00" stroke-width="1" />
<rect x="697.5" y="164.5" width="4" height="2.5" fill="#0000ff"/>
</g>
<text x="676" y="96" font-size="5" fill="#00ff00" text-anchor="middle" font-weight="bold" >16</text>
<text transform="translate(690 89) rotate(60)" font-size="5" fill="#00ff00" text-anchor="middle" font-weight="bold">Φ22</text>
<text transform="translate(659 137) rotate(-55)" font-size="6" fill="#00ff00" text-anchor="middle" font-weight="bold">60°</text>
<text transform="translate(724 183) rotate(-50)" font-size="6" fill="#00ff00" text-anchor="middle" font-weight="bold">60°</text>
<text transform="translate(703.5 156) rotate(-90)" font-size="5" fill="#00ff00" text-anchor="middle" font-weight="bold">23</text>
<text x="598" y="210.5" font-size="5" fill="#00ff00" text-anchor="start" font-weight="bold" textLength="21" lengthAdjust="spacingAndGlyphs" >6-Φ18均布</text>
<text x="620" y="251.5" font-size="5" fill="#00ff00" text-anchor="start" font-weight="bold" textLength="21" lengthAdjust="spacingAndGlyphs" >6-M16均布</text>
<g shape-rendering="crispEdges">
<line x1="333.5" y1="424.5" x2="563.5" y2="424.5" stroke="#00ff00" stroke-width="1" />
<line x1="333.5" y1="433.5" x2="563.5" y2="433.5" stroke="#00ff00" stroke-width="1" />
<line x1="333.5" y1="442.5" x2="563.5" y2="442.5" stroke="#00ff00" stroke-width="1" />
<line x1="333.5" y1="451.5" x2="563.5" y2="451.5" stroke="#00ff00" stroke-width="1" />
<line x1="333.5" y1="460.5" x2="563.5" y2="460.5" stroke="#00ff00" stroke-width="1" />
<line x1="333.5" y1="469.5" x2="563.5" y2="469.5" stroke="#00ff00" stroke-width="1" />
<line x1="333.5" y1="478.5" x2="563.5" y2="478.5" stroke="#00ff00" stroke-width="1" />
<line x1="333.5" y1="487.5" x2="563.5" y2="487.5" stroke="#00ff00" stroke-width="1" />
<line x1="333.5" y1="496.5" x2="563.5" y2="496.5" stroke="#00ff00" stroke-width="1" />
<line x1="333.5" y1="505.5" x2="563.5" y2="505.5" stroke="#00ff00" stroke-width="1" />
<line x1="333.5" y1="514.5" x2="563.5" y2="514.5" stroke="#00ff00" stroke-width="1" />
<line x1="333.5" y1="424.5" x2="333.5" y2="532.5" stroke="#00ff00" stroke-width="1" />
<line x1="343.5" y1="424.5" x2="343.5" y2="532.5" stroke="#00ff00" stroke-width="1" />
<line x1="394.5" y1="424.5" x2="394.5" y2="532.5" stroke="#00ff00" stroke-width="1" />
<line x1="451.5" y1="424.5" x2="451.5" y2="532.5" stroke="#00ff00" stroke-width="1" />
<line x1="461.5" y1="424.5" x2="461.5" y2="532.5" stroke="#00ff00" stroke-width="1" />
<line x1="509.5" y1="424.5" x2="509.5" y2="532.5" stroke="#00ff00" stroke-width="1" />
<line x1="522.5" y1="424.5" x2="522.5" y2="532.5" stroke="#00ff00" stroke-width="1" />
<line x1="537.5" y1="424.5" x2="537.5" y2="532.5" stroke="#00ff00" stroke-width="1" />
<line x1="509.5" y1="523.5" x2="537.5" y2="523.5" stroke="#00ff00" stroke-width="1" />
<line x1="563.5" y1="361.5" x2="793.5" y2="361.5" stroke="#00ff00" stroke-width="1" />
<line x1="563.5" y1="370.5" x2="793.5" y2="370.5" stroke="#00ff00" stroke-width="1" />
<line x1="563.5" y1="379.5" x2="793.5" y2="379.5" stroke="#00ff00" stroke-width="1" />
<line x1="563.5" y1="388.5" x2="793.5" y2="388.5" stroke="#00ff00" stroke-width="1" />
<line x1="563.5" y1="397.5" x2="793.5" y2="397.5" stroke="#00ff00" stroke-width="1" />
<line x1="563.5" y1="406.5" x2="793.5" y2="406.5" stroke="#00ff00" stroke-width="1" />
<line x1="563.5" y1="415.5" x2="793.5" y2="415.5" stroke="#00ff00" stroke-width="1" />
<line x1="563.5" y1="424.5" x2="793.5" y2="424.5" stroke="#00ff00" stroke-width="1" />
<line x1="563.5" y1="433.5" x2="793.5" y2="433.5" stroke="#00ff00" stroke-width="1" />
<line x1="563.5" y1="442.5" x2="793.5" y2="442.5" stroke="#00ff00" stroke-width="1" />
<line x1="563.5" y1="460.5" x2="793.5" y2="460.5" stroke="#00ff00" stroke-width="1" />
<line x1="563.5" y1="361.5" x2="563.5" y2="460.5" stroke="#00ff00" stroke-width="1" />
<line x1="573.5" y1="361.5" x2="573.5" y2="460.5" stroke="#00ff00" stroke-width="1" />
<line x1="624.5" y1="361.5" x2="624.5" y2="460.5" stroke="#00ff00" stroke-width="1" />
<line x1="681.5" y1="361.5" x2="681.5" y2="460.5" stroke="#00ff00" stroke-width="1" />
<line x1="691.5" y1="361.5" x2="691.5" y2="460.5" stroke="#00ff00" stroke-width="1" />
<line x1="740.5" y1="361.5" x2="740.5" y2="460.5" stroke="#00ff00" stroke-width="1" />
<line x1="752.5" y1="361.5" x2="752.5" y2="460.5" stroke="#00ff00" stroke-width="1" />
<line x1="768.5" y1="361.5" x2="768.5" y2="460.5" stroke="#00ff00" stroke-width="1" />
<line x1="563.5" y1="361.5" x2="563.5" y2="532.5" stroke="#00ff00" stroke-width="1" />
<line x1="740.5" y1="451.5" x2="768.5" y2="451.5" stroke="#00ff00" stroke-width="1" />
<line x1="563.5" y1="469.5" x2="665.5" y2="469.5" stroke="#00ff00" stroke-width="1" />
<line x1="563.5" y1="478.5" x2="665.5" y2="478.5" stroke="#00ff00" stroke-width="1" />
<line x1="563.5" y1="487.5" x2="665.5" y2="487.5" stroke="#00ff00" stroke-width="1" />
<line x1="563.5" y1="496.5" x2="665.5" y2="496.5" stroke="#00ff00" stroke-width="1" />
<line x1="563.5" y1="505.5" x2="665.5" y2="505.5" stroke="#00ff00" stroke-width="1" />
<line x1="563.5" y1="514.5" x2="665.5" y2="514.5" stroke="#00ff00" stroke-width="1" />
<line x1="563.5" y1="523.5" x2="665.5" y2="523.5" stroke="#00ff00" stroke-width="1" />
<line x1="576.5" y1="460.5" x2="576.5" y2="496.5" stroke="#00ff00" stroke-width="1" />
<line x1="589.5" y1="460.5" x2="589.5" y2="496.5" stroke="#00ff00" stroke-width="1" />
<line x1="609.5" y1="460.5" x2="609.5" y2="496.5" stroke="#00ff00" stroke-width="1" />
<line x1="630.5" y1="460.5" x2="630.5" y2="496.5" stroke="#00ff00" stroke-width="1" />
<line x1="646.5" y1="460.5" x2="646.5" y2="496.5" stroke="#00ff00" stroke-width="1" />
<line x1="579.5" y1="496.5" x2="579.5" y2="532.5" stroke="#00ff00" stroke-width="1" />
<line x1="594.5" y1="496.5" x2="594.5" y2="532.5" stroke="#00ff00" stroke-width="1" />
<line x1="614.5" y1="496.5" x2="614.5" y2="532.5" stroke="#00ff00" stroke-width="1" />
<line x1="630.5" y1="496.5" x2="630.5" y2="532.5" stroke="#00ff00" stroke-width="1" />
<line x1="646.5" y1="496.5" x2="646.5" y2="532.5" stroke="#00ff00" stroke-width="1" />
<line x1="665.5" y1="460.5" x2="665.5" y2="532.5" stroke="#00ff00" stroke-width="1" />
<line x1="729.5" y1="460.5" x2="729.5" y2="532.5" stroke="#00ff00" stroke-width="1" />
<line x1="665.5" y1="496.5" x2="729.5" y2="496.5" stroke="#00ff00" stroke-width="1" />
<line x1="665.5" y1="509.5" x2="793.5" y2="509.5" stroke="#00ff00" stroke-width="1" />
<line x1="665.5" y1="520.5" x2="729.5" y2="520.5" stroke="#00ff00" stroke-width="1" />
<line x1="699.5" y1="496.5" x2="699.5" y2="520.5" stroke="#00ff00" stroke-width="1" />
<line x1="714.5" y1="496.5" x2="714.5" y2="520.5" stroke="#00ff00" stroke-width="1" />
<line x1="674.5" y1="509.5" x2="674.5" y2="520.5" stroke="#00ff00" stroke-width="1" />
<line x1="682.5" y1="509.5" x2="682.5" y2="520.5" stroke="#00ff00" stroke-width="1" />
<line x1="690.5" y1="509.5" x2="690.5" y2="520.5" stroke="#00ff00" stroke-width="1" />
<line x1="729.5" y1="483.5" x2="793.5" y2="483.5" stroke="#00ff00" stroke-width="1" />
</g>
<g shape-rendering="crispEdges">
<rect x="64.5" y="18.5" width="738" height="522" stroke="#ffffff" fill="none" stroke-width="1" />
<rect x="108.5" y="27.5" width="685" height="505" stroke="#ffffff" fill="none" stroke-width="1" />
</g>
<text x="334.5" y="430.3" font-size="5" fill="#00ff00" text-anchor="start" font-weight="bold" textLength="3.5" lengthAdjust="spacingAndGlyphs" stroke="#00ff00" stroke-width="0.3">19</text>
<text x="344.5" y="430.3" font-size="5" fill="#00ff00" text-anchor="start" font-weight="bold" textLength="20" lengthAdjust="spacingAndGlyphs" stroke="#00ff00" stroke-width="0.3">GB/T70-2000</text>
<text x="396" y="430.3" font-size="5" fill="#00ff00" text-anchor="start" font-weight="bold" textLength="9" lengthAdjust="spacingAndGlyphs" stroke="#00ff00" stroke-width="0.3">螺钉</text>
<text x="454" y="430.3" font-size="5" fill="#00ff00" text-anchor="start" font-weight="bold" textLength="2.5" lengthAdjust="spacingAndGlyphs" stroke="#00ff00" stroke-width="0.3">6</text>
<text x="462.5" y="430.3" font-size="5" fill="#00ff00" text-anchor="start" font-weight="bold" textLength="10" lengthAdjust="spacingAndGlyphs" stroke="#00ff00" stroke-width="0.3">35钢</text>
<text x="334.5" y="439.3" font-size="5" fill="#00ff00" text-anchor="start" font-weight="bold" textLength="3.5" lengthAdjust="spacingAndGlyphs" stroke="#00ff00" stroke-width="0.3">18</text>
<text x="396" y="439.3" font-size="5" fill="#00ff00" text-anchor="start" font-weight="bold" textLength="9" lengthAdjust="spacingAndGlyphs" stroke="#00ff00" stroke-width="0.3">导套</text>
<text x="454" y="439.3" font-size="5" fill="#00ff00" text-anchor="start" font-weight="bold" textLength="2.5" lengthAdjust="spacingAndGlyphs" stroke="#00ff00" stroke-width="0.3">2</text>
<text x="462.5" y="439.3" font-size="5" fill="#00ff00" text-anchor="start" font-weight="bold" textLength="10" lengthAdjust="spacingAndGlyphs" stroke="#00ff00" stroke-width="0.3">45钢</text>
<text x="334.5" y="448.3" font-size="5" fill="#00ff00" text-anchor="start" font-weight="bold" textLength="3.5" lengthAdjust="spacingAndGlyphs" stroke="#00ff00" stroke-width="0.3">17</text>
<text x="396" y="448.3" font-size="5" fill="#00ff00" text-anchor="start" font-weight="bold" textLength="9" lengthAdjust="spacingAndGlyphs" stroke="#00ff00" stroke-width="0.3">压盖</text>
<text x="454" y="448.3" font-size="5" fill="#00ff00" text-anchor="start" font-weight="bold" textLength="2.5" lengthAdjust="spacingAndGlyphs" stroke="#00ff00" stroke-width="0.3">1</text>
<text x="462.5" y="448.3" font-size="5" fill="#00ff00" text-anchor="start" font-weight="bold" textLength="10" lengthAdjust="spacingAndGlyphs" stroke="#00ff00" stroke-width="0.3">45钢</text>
<text x="334.5" y="457.3" font-size="5" fill="#00ff00" text-anchor="start" font-weight="bold" textLength="3.5" lengthAdjust="spacingAndGlyphs" stroke="#00ff00" stroke-width="0.3">16</text>
<text x="396" y="457.3" font-size="5" fill="#00ff00" text-anchor="start" font-weight="bold" textLength="12" lengthAdjust="spacingAndGlyphs" stroke="#00ff00" stroke-width="0.3">防尘圈</text>
<text x="454" y="457.3" font-size="5" fill="#00ff00" text-anchor="start" font-weight="bold" textLength="2.5" lengthAdjust="spacingAndGlyphs" stroke="#00ff00" stroke-width="0.3">1</text>
<text x="462.5" y="457.3" font-size="5" fill="#00ff00" text-anchor="start" font-weight="bold" textLength="10" lengthAdjust="spacingAndGlyphs" stroke="#00ff00" stroke-width="0.3">聚氨酯</text>
<text x="334.5" y="466.3" font-size="5" fill="#00ff00" text-anchor="start" font-weight="bold" textLength="3.5" lengthAdjust="spacingAndGlyphs" stroke="#00ff00" stroke-width="0.3">15</text>
<text x="396" y="466.3" font-size="5" fill="#00ff00" text-anchor="start" font-weight="bold" textLength="12" lengthAdjust="spacingAndGlyphs" stroke="#00ff00" stroke-width="0.3">密封圈</text>
<text x="454" y="466.3" font-size="5" fill="#00ff00" text-anchor="start" font-weight="bold" textLength="2.5" lengthAdjust="spacingAndGlyphs" stroke="#00ff00" stroke-width="0.3">2</text>
<text x="462.5" y="466.3" font-size="5" fill="#00ff00" text-anchor="start" font-weight="bold" textLength="10" lengthAdjust="spacingAndGlyphs" stroke="#00ff00" stroke-width="0.3">45钢</text>
<text x="334.5" y="475.3" font-size="5" fill="#00ff00" text-anchor="start" font-weight="bold" textLength="3.5" lengthAdjust="spacingAndGlyphs" stroke="#00ff00" stroke-width="0.3">14</text>
<text x="344.5" y="475.3" font-size="5" fill="#00ff00" text-anchor="start" font-weight="bold" textLength="20" lengthAdjust="spacingAndGlyphs" stroke="#00ff00" stroke-width="0.3">GB/T70-2000</text>
<text x="396" y="475.3" font-size="5" fill="#00ff00" text-anchor="start" font-weight="bold" textLength="9" lengthAdjust="spacingAndGlyphs" stroke="#00ff00" stroke-width="0.3">螺钉</text>
<text x="454" y="475.3" font-size="5" fill="#00ff00" text-anchor="start" font-weight="bold" textLength="2.5" lengthAdjust="spacingAndGlyphs" stroke="#00ff00" stroke-width="0.3">6</text>
<text x="462.5" y="475.3" font-size="5" fill="#00ff00" text-anchor="start" font-weight="bold" textLength="10" lengthAdjust="spacingAndGlyphs" stroke="#00ff00" stroke-width="0.3">35钢</text>
<text x="334.5" y="484.3" font-size="5" fill="#00ff00" text-anchor="start" font-weight="bold" textLength="3.5" lengthAdjust="spacingAndGlyphs" stroke="#00ff00" stroke-width="0.3">13</text>
<text x="344.5" y="484.3" font-size="5" fill="#00ff00" text-anchor="start" font-weight="bold" textLength="20" lengthAdjust="spacingAndGlyphs" stroke="#00ff00" stroke-width="0.3">GB/T70-2000</text>
<text x="396" y="484.3" font-size="5" fill="#00ff00" text-anchor="start" font-weight="bold" textLength="9" lengthAdjust="spacingAndGlyphs" stroke="#00ff00" stroke-width="0.3">螺钉</text>
<text x="454" y="484.3" font-size="5" fill="#00ff00" text-anchor="start" font-weight="bold" textLength="2.5" lengthAdjust="spacingAndGlyphs" stroke="#00ff00" stroke-width="0.3">6</text>
<text x="462.5" y="484.3" font-size="5" fill="#00ff00" text-anchor="start" font-weight="bold" textLength="10" lengthAdjust="spacingAndGlyphs" stroke="#00ff00" stroke-width="0.3">35钢</text>
<text x="334.5" y="493.3" font-size="5" fill="#00ff00" text-anchor="start" font-weight="bold" textLength="3.5" lengthAdjust="spacingAndGlyphs" stroke="#00ff00" stroke-width="0.3">12</text>
<text x="344.5" y="493.3" font-size="5" fill="#00ff00" text-anchor="start" font-weight="bold" textLength="17" lengthAdjust="spacingAndGlyphs" stroke="#00ff00" stroke-width="0.3">GB/T6170</text>
<text x="396" y="493.3" font-size="5" fill="#00ff00" text-anchor="start" font-weight="bold" textLength="9" lengthAdjust="spacingAndGlyphs" stroke="#00ff00" stroke-width="0.3">螺母</text>
<text x="454" y="493.3" font-size="5" fill="#00ff00" text-anchor="start" font-weight="bold" textLength="2.5" lengthAdjust="spacingAndGlyphs" stroke="#00ff00" stroke-width="0.3">4</text>
<text x="462.5" y="493.3" font-size="5" fill="#00ff00" text-anchor="start" font-weight="bold" textLength="13" lengthAdjust="spacingAndGlyphs" stroke="#00ff00" stroke-width="0.3">Q235</text>
<text x="334.5" y="502.3" font-size="5" fill="#00ff00" text-anchor="start" font-weight="bold" textLength="3.5" lengthAdjust="spacingAndGlyphs" stroke="#00ff00" stroke-width="0.3">11</text>
<text x="344.5" y="502.3" font-size="5" fill="#00ff00" text-anchor="start" font-weight="bold" textLength="20" lengthAdjust="spacingAndGlyphs" stroke="#00ff00" stroke-width="0.3">GB/T70-2000</text>
<text x="396" y="502.3" font-size="5" fill="#00ff00" text-anchor="start" font-weight="bold" textLength="9" lengthAdjust="spacingAndGlyphs" stroke="#00ff00" stroke-width="0.3">螺钉</text>
<text x="454" y="502.3" font-size="5" fill="#00ff00" text-anchor="start" font-weight="bold" textLength="2.5" lengthAdjust="spacingAndGlyphs" stroke="#00ff00" stroke-width="0.3">4</text>
<text x="462.5" y="502.3" font-size="5" fill="#00ff00" text-anchor="start" font-weight="bold" textLength="10" lengthAdjust="spacingAndGlyphs" stroke="#00ff00" stroke-width="0.3">35钢</text>
<text x="334.5" y="511.3" font-size="5" fill="#00ff00" text-anchor="start" font-weight="bold" textLength="3.5" lengthAdjust="spacingAndGlyphs" stroke="#00ff00" stroke-width="0.3">10</text>
<text x="396" y="511.3" font-size="5" fill="#00ff00" text-anchor="start" font-weight="bold" textLength="30" lengthAdjust="spacingAndGlyphs" stroke="#00ff00" stroke-width="0.3">Y型密封圈及挡圈</text>
<text x="454" y="511.3" font-size="5" fill="#00ff00" text-anchor="start" font-weight="bold" textLength="2.5" lengthAdjust="spacingAndGlyphs" stroke="#00ff00" stroke-width="0.3">2</text>
<text x="462.5" y="511.3" font-size="5" fill="#00ff00" text-anchor="start" font-weight="bold" textLength="10" lengthAdjust="spacingAndGlyphs" stroke="#00ff00" stroke-width="0.3">45钢</text>
<text x="564.5" y="367.3" font-size="5" fill="#00ff00" text-anchor="start" font-weight="bold" textLength="2.5" lengthAdjust="spacingAndGlyphs" stroke="#00ff00" stroke-width="0.3">9</text>
<text x="574.5" y="367.3" font-size="5" fill="#00ff00" text-anchor="start" font-weight="bold" textLength="20" lengthAdjust="spacingAndGlyphs" stroke="#00ff00" stroke-width="0.3">YX D110</text>
<text x="626" y="367.3" font-size="6" fill="#00ff00" text-anchor="start" font-weight="bold" textLength="40" lengthAdjust="spacingAndGlyphs" stroke="#00ff00" stroke-width="0.3">孔用YX型密封圈</text>
<text x="684" y="367.3" font-size="5" fill="#00ff00" text-anchor="start" font-weight="bold" textLength="2.5" lengthAdjust="spacingAndGlyphs" stroke="#00ff00" stroke-width="0.3">2</text>
<text x="692.5" y="367.3" font-size="5" fill="#00ff00" text-anchor="start" font-weight="bold" textLength="7" lengthAdjust="spacingAndGlyphs" stroke="#00ff00" stroke-width="0.3">橡胶</text>
<text x="564.5" y="376.3" font-size="5" fill="#00ff00" text-anchor="start" font-weight="bold" textLength="2.5" lengthAdjust="spacingAndGlyphs" stroke="#00ff00" stroke-width="0.3">8</text>
<text x="626" y="376.3" font-size="6" fill="#00ff00" text-anchor="start" font-weight="bold" textLength="11" lengthAdjust="spacingAndGlyphs" stroke="#00ff00" stroke-width="0.3">活塞</text>
<text x="684" y="376.3" font-size="5" fill="#00ff00" text-anchor="start" font-weight="bold" textLength="2.5" lengthAdjust="spacingAndGlyphs" stroke="#00ff00" stroke-width="0.3">1</text>
<text x="692.5" y="376.3" font-size="5" fill="#00ff00" text-anchor="start" font-weight="bold" textLength="12" lengthAdjust="spacingAndGlyphs" stroke="#00ff00" stroke-width="0.3">HT200</text>
<text x="564.5" y="385.3" font-size="5" fill="#00ff00" text-anchor="start" font-weight="bold" textLength="2.5" lengthAdjust="spacingAndGlyphs" stroke="#00ff00" stroke-width="0.3">7</text>
<text x="626" y="385.3" font-size="6" fill="#00ff00" text-anchor="start" font-weight="bold" textLength="11" lengthAdjust="spacingAndGlyphs" stroke="#00ff00" stroke-width="0.3">缸筒</text>
<text x="684" y="385.3" font-size="5" fill="#00ff00" text-anchor="start" font-weight="bold" textLength="2.5" lengthAdjust="spacingAndGlyphs" stroke="#00ff00" stroke-width="0.3">1</text>
<text x="692.5" y="385.3" font-size="5" fill="#00ff00" text-anchor="start" font-weight="bold" textLength="18" lengthAdjust="spacingAndGlyphs" stroke="#00ff00" stroke-width="0.3">无缝钢管</text>
<text x="564.5" y="394.3" font-size="5" fill="#00ff00" text-anchor="start" font-weight="bold" textLength="2.5" lengthAdjust="spacingAndGlyphs" stroke="#00ff00" stroke-width="0.3">6</text>
<text x="574.5" y="394.3" font-size="5" fill="#00ff00" text-anchor="start" font-weight="bold" textLength="26" lengthAdjust="spacingAndGlyphs" stroke="#00ff00" stroke-width="0.3">GB/T3452.1</text>
<text x="626" y="394.3" font-size="6" fill="#00ff00" text-anchor="start" font-weight="bold" textLength="22" lengthAdjust="spacingAndGlyphs" stroke="#00ff00" stroke-width="0.3">O形密封圈</text>
<text x="684" y="394.3" font-size="5" fill="#00ff00" text-anchor="start" font-weight="bold" textLength="2.5" lengthAdjust="spacingAndGlyphs" stroke="#00ff00" stroke-width="0.3">6</text>
<text x="692.5" y="394.3" font-size="5" fill="#00ff00" text-anchor="start" font-weight="bold" textLength="7" lengthAdjust="spacingAndGlyphs" stroke="#00ff00" stroke-width="0.3">橡胶</text>
<text x="564.5" y="403.3" font-size="5" fill="#00ff00" text-anchor="start" font-weight="bold" textLength="2.5" lengthAdjust="spacingAndGlyphs" stroke="#00ff00" stroke-width="0.3">5</text>
<text x="574.5" y="403.3" font-size="5" fill="#00ff00" text-anchor="start" font-weight="bold" textLength="26" lengthAdjust="spacingAndGlyphs" stroke="#00ff00" stroke-width="0.3">GB/T3452.1</text>
<text x="626" y="403.3" font-size="6" fill="#00ff00" text-anchor="start" font-weight="bold" textLength="22" lengthAdjust="spacingAndGlyphs" stroke="#00ff00" stroke-width="0.3">O形密封圈</text>
<text x="684" y="403.3" font-size="5" fill="#00ff00" text-anchor="start" font-weight="bold" textLength="2.5" lengthAdjust="spacingAndGlyphs" stroke="#00ff00" stroke-width="0.3">1</text>
<text x="692.5" y="403.3" font-size="5" fill="#00ff00" text-anchor="start" font-weight="bold" textLength="7" lengthAdjust="spacingAndGlyphs" stroke="#00ff00" stroke-width="0.3">橡胶</text>
<text x="564.5" y="412.3" font-size="5" fill="#00ff00" text-anchor="start" font-weight="bold" textLength="2.5" lengthAdjust="spacingAndGlyphs" stroke="#00ff00" stroke-width="0.3">4</text>
<text x="626" y="412.3" font-size="6" fill="#00ff00" text-anchor="start" font-weight="bold" textLength="22" lengthAdjust="spacingAndGlyphs" stroke="#00ff00" stroke-width="0.3">O形密封圈</text>
<text x="684" y="412.3" font-size="5" fill="#00ff00" text-anchor="start" font-weight="bold" textLength="2.5" lengthAdjust="spacingAndGlyphs" stroke="#00ff00" stroke-width="0.3">1</text>
<text x="692.5" y="412.3" font-size="5" fill="#00ff00" text-anchor="start" font-weight="bold" textLength="22" lengthAdjust="spacingAndGlyphs" stroke="#00ff00" stroke-width="0.3">聚四氟乙烯</text>
<text x="564.5" y="421.3" font-size="5" fill="#00ff00" text-anchor="start" font-weight="bold" textLength="2.5" lengthAdjust="spacingAndGlyphs" stroke="#00ff00" stroke-width="0.3">3</text>
<text x="626" y="421.3" font-size="6" fill="#00ff00" text-anchor="start" font-weight="bold" textLength="15" lengthAdjust="spacingAndGlyphs" stroke="#00ff00" stroke-width="0.3">前端盖</text>
<text x="684" y="421.3" font-size="5" fill="#00ff00" text-anchor="start" font-weight="bold" textLength="2.5" lengthAdjust="spacingAndGlyphs" stroke="#00ff00" stroke-width="0.3">1</text>
<text x="692.5" y="421.3" font-size="5" fill="#00ff00" text-anchor="start" font-weight="bold" textLength="10" lengthAdjust="spacingAndGlyphs" stroke="#00ff00" stroke-width="0.3">45钢</text>
<text x="564.5" y="430.3" font-size="5" fill="#00ff00" text-anchor="start" font-weight="bold" textLength="2.5" lengthAdjust="spacingAndGlyphs" stroke="#00ff00" stroke-width="0.3">2</text>
<text x="626" y="430.3" font-size="6" fill="#00ff00" text-anchor="start" font-weight="bold" textLength="11" lengthAdjust="spacingAndGlyphs" stroke="#00ff00" stroke-width="0.3">拉杆</text>
<text x="684" y="430.3" font-size="5" fill="#00ff00" text-anchor="start" font-weight="bold" textLength="2.5" lengthAdjust="spacingAndGlyphs" stroke="#00ff00" stroke-width="0.3">1</text>
<text x="692.5" y="430.3" font-size="5" fill="#00ff00" text-anchor="start" font-weight="bold" textLength="10" lengthAdjust="spacingAndGlyphs" stroke="#00ff00" stroke-width="0.3">45钢</text>
<text x="564.5" y="439.3" font-size="5" fill="#00ff00" text-anchor="start" font-weight="bold" textLength="2.5" lengthAdjust="spacingAndGlyphs" stroke="#00ff00" stroke-width="0.3">1</text>
<text x="626" y="439.3" font-size="6" fill="#00ff00" text-anchor="start" font-weight="bold" textLength="15" lengthAdjust="spacingAndGlyphs" stroke="#00ff00" stroke-width="0.3">活塞杆</text>
<text x="684" y="439.3" font-size="5" fill="#00ff00" text-anchor="start" font-weight="bold" textLength="2.5" lengthAdjust="spacingAndGlyphs" stroke="#00ff00" stroke-width="0.3">1</text>
<text x="692.5" y="439.3" font-size="5" fill="#00ff00" text-anchor="start" font-weight="bold" textLength="10" lengthAdjust="spacingAndGlyphs" stroke="#00ff00" stroke-width="0.3">45钢</text>
<text x="335" y="528" font-size="10" fill="#00ff00" text-anchor="start" font-weight="900" textLength="11" lengthAdjust="spacingAndGlyphs" >序号</text>
<text x="362.5" y="528" font-size="10" fill="#00ff00" text-anchor="start" font-weight="900" textLength="6" lengthAdjust="spacingAndGlyphs" >代</text>
<text x="362.5" y="539" font-size="10" fill="#00ff00" text-anchor="start" font-weight="900" textLength="6" lengthAdjust="spacingAndGlyphs" >号</text>
<text x="414.5" y="528" font-size="10" fill="#00ff00" text-anchor="start" font-weight="900" textLength="6" lengthAdjust="spacingAndGlyphs" >名</text>
<text x="414.5" y="539" font-size="10" fill="#00ff00" text-anchor="start" font-weight="900" textLength="6" lengthAdjust="spacingAndGlyphs" >称</text>
<text x="452.5" y="528" font-size="10" fill="#00ff00" text-anchor="start" font-weight="900" textLength="10.5" lengthAdjust="spacingAndGlyphs" >数量</text>
<text x="478.5" y="528" font-size="10" fill="#00ff00" text-anchor="start" font-weight="900" textLength="6" lengthAdjust="spacingAndGlyphs" >材</text>
<text x="490.5" y="528" font-size="10" fill="#00ff00" text-anchor="start" font-weight="900" textLength="6" lengthAdjust="spacingAndGlyphs" >料</text>
<text x="511" y="522" font-size="9" fill="#00ff00" text-anchor="start" font-weight="900" textLength="19" lengthAdjust="spacingAndGlyphs" >单件总计</text>
<text x="520" y="532.5" font-size="9" fill="#00ff00" text-anchor="start" font-weight="900" textLength="5.5" lengthAdjust="spacingAndGlyphs" >重</text>
<text x="525.5" y="532.5" font-size="8" fill="#00ff00" text-anchor="start" font-weight="900" textLength="5.5" lengthAdjust="spacingAndGlyphs" >计</text>
<text x="520" y="542" font-size="9" fill="#00ff00" text-anchor="start" font-weight="900" textLength="5.5" lengthAdjust="spacingAndGlyphs" >量</text>
<text x="564.5" y="456" font-size="10" fill="#00ff00" text-anchor="start" font-weight="900" textLength="11.5" lengthAdjust="spacingAndGlyphs" >序号</text>
<text x="592" y="456" font-size="10" fill="#00ff00" text-anchor="start" font-weight="900" textLength="6" lengthAdjust="spacingAndGlyphs" >代</text>
<text x="592" y="467" font-size="10" fill="#00ff00" text-anchor="start" font-weight="900" textLength="6" lengthAdjust="spacingAndGlyphs" >号</text>
<text x="644.5" y="456" font-size="10" fill="#00ff00" text-anchor="start" font-weight="900" textLength="6" lengthAdjust="spacingAndGlyphs" >名</text>
<text x="644.5" y="467" font-size="10" fill="#00ff00" text-anchor="start" font-weight="900" textLength="6" lengthAdjust="spacingAndGlyphs" >称</text>
<text x="682" y="456" font-size="10" fill="#00ff00" text-anchor="start" font-weight="900" textLength="11.5" lengthAdjust="spacingAndGlyphs" >数量</text>
<text x="708" y="456" font-size="10" fill="#00ff00" text-anchor="start" font-weight="900" textLength="6" lengthAdjust="spacingAndGlyphs" >材</text>
<text x="721" y="456" font-size="10" fill="#00ff00" text-anchor="start" font-weight="900" textLength="6" lengthAdjust="spacingAndGlyphs" >料</text>
<text x="741" y="450.5" font-size="9" fill="#00ff00" text-anchor="start" font-weight="900" textLength="20" lengthAdjust="spacingAndGlyphs" >单件总计</text>
<text x="749.5" y="461" font-size="9" fill="#00ff00" text-anchor="start" font-weight="900" textLength="5.5" lengthAdjust="spacingAndGlyphs" >重</text>
<text x="755" y="461" font-size="8" fill="#00ff00" text-anchor="start" font-weight="900" textLength="5.5" lengthAdjust="spacingAndGlyphs" >计</text>
<text x="771.5" y="456" font-size="10" fill="#00ff00" text-anchor="start" font-weight="900" textLength="6" lengthAdjust="spacingAndGlyphs" >备</text>
<text x="771.5" y="467" font-size="10" fill="#00ff00" text-anchor="start" font-weight="900" textLength="6" lengthAdjust="spacingAndGlyphs" >注</text>
<text x="746" y="479" font-size="13" fill="#00ff00" text-anchor="start" font-weight="900" textLength="43" lengthAdjust="spacingAndGlyphs" >液压缸装配图</text>
<text x="684" y="481" font-size="10" fill="#00ff00" text-anchor="start" font-weight="900" textLength="18" lengthAdjust="spacingAndGlyphs" >装配图</text>
<text x="757" y="525" font-size="10" fill="#00ff00" text-anchor="start" font-weight="900" textLength="9" lengthAdjust="spacingAndGlyphs" >A3</text>
<text x="675" y="507" font-size="9" fill="#00ff00" text-anchor="start" font-weight="900" textLength="19" lengthAdjust="spacingAndGlyphs" >阶段标记</text>
<text x="702" y="507" font-size="9" fill="#00ff00" text-anchor="start" font-weight="900" textLength="12" lengthAdjust="spacingAndGlyphs" >重量</text>
<text x="717.5" y="507" font-size="9" fill="#00ff00" text-anchor="start" font-weight="900" textLength="5.5" lengthAdjust="spacingAndGlyphs" >比</text>
<text x="717.5" y="518" font-size="9" fill="#00ff00" text-anchor="start" font-weight="900" textLength="5.5" lengthAdjust="spacingAndGlyphs" >例</text>
<text x="675" y="518" font-size="8" fill="#00ff00" text-anchor="start" font-weight="900" textLength="6" lengthAdjust="spacingAndGlyphs" >记</text>
<text x="683" y="531" font-size="9" fill="#00ff00" text-anchor="start" font-weight="900" textLength="5.5" lengthAdjust="spacingAndGlyphs" >共</text>
<text x="698.5" y="531" font-size="9" fill="#00ff00" text-anchor="start" font-weight="900" textLength="5.5" lengthAdjust="spacingAndGlyphs" >张</text>
<text x="712" y="531" font-size="9" fill="#00ff00" text-anchor="start" font-weight="900" textLength="5.5" lengthAdjust="spacingAndGlyphs" >第</text>
<text x="683" y="541" font-size="8" fill="#00ff00" text-anchor="start" font-weight="900" textLength="5.5" lengthAdjust="spacingAndGlyphs" >张</text>
<text x="565" y="496" font-size="9" fill="#00ff00" text-anchor="start" font-weight="900" textLength="5.5" lengthAdjust="spacingAndGlyphs" >标</text>
<text x="579" y="496" font-size="9" fill="#00ff00" text-anchor="start" font-weight="900" textLength="5" lengthAdjust="spacingAndGlyphs" >处</text>
<text x="594" y="496" font-size="9" fill="#00ff00" text-anchor="start" font-weight="900" textLength="11.5" lengthAdjust="spacingAndGlyphs" >分区</text>
<text x="609.5" y="496" font-size="9" fill="#00ff00" text-anchor="start" font-weight="900" textLength="35" lengthAdjust="spacingAndGlyphs" >更改文件号</text>
<text x="646" y="496" font-size="9" fill="#00ff00" text-anchor="start" font-weight="900" textLength="18" lengthAdjust="spacingAndGlyphs" >签名年、月、日</text>
<text x="565" y="505" font-size="9" fill="#00ff00" text-anchor="start" font-weight="900" textLength="5.5" lengthAdjust="spacingAndGlyphs" >设</text>
<text x="578.5" y="505" font-size="9" fill="#00ff00" text-anchor="start" font-weight="900" textLength="10" lengthAdjust="spacingAndGlyphs" >签名</text>
<text x="589.5" y="505" font-size="9" fill="#00ff00" text-anchor="start" font-weight="900" textLength="14" lengthAdjust="spacingAndGlyphs" >年月日</text>
<text x="615" y="505" font-size="9" fill="#00ff00" text-anchor="start" font-weight="900" textLength="14" lengthAdjust="spacingAndGlyphs" >标准化</text>
<text x="632" y="505" font-size="9" fill="#00ff00" text-anchor="start" font-weight="900" textLength="12" lengthAdjust="spacingAndGlyphs" >签名</text>
<text x="647" y="505" font-size="9" fill="#00ff00" text-anchor="start" font-weight="900" textLength="17" lengthAdjust="spacingAndGlyphs" >年月日</text>
<text x="565" y="515" font-size="9" fill="#00ff00" text-anchor="start" font-weight="900" textLength="5.5" lengthAdjust="spacingAndGlyphs" >计</text>
<text x="565" y="523" font-size="9" fill="#00ff00" text-anchor="start" font-weight="900" textLength="5.5" lengthAdjust="spacingAndGlyphs" >审</text>
<text x="565" y="532" font-size="9" fill="#00ff00" text-anchor="start" font-weight="900" textLength="5.5" lengthAdjust="spacingAndGlyphs" >核</text>
<text x="571" y="531" font-size="7" fill="#00ff00" text-anchor="start" font-weight="900" textLength="7" lengthAdjust="spacingAndGlyphs" >工艺</text>
<text x="616" y="514" font-size="8" fill="#00ff00" text-anchor="start" font-weight="900" textLength="5" lengthAdjust="spacingAndGlyphs" >批</text>
<text x="616" y="521" font-size="7" fill="#00ff00" text-anchor="start" font-weight="900" textLength="5" lengthAdjust="spacingAndGlyphs" >准</text>
<text x="161" y="322" font-size="9" fill="#00ff00" text-anchor="start" font-weight="bold" textLength="27" lengthAdjust="spacingAndGlyphs" >技术要求</text>
<text x="161" y="333.5" font-size="9" fill="#00ff00" text-anchor="start" font-weight="bold" textLength="6" lengthAdjust="spacingAndGlyphs" >1、</text>
<text x="173.5" y="333.5" font-size="9" fill="#00ff00" text-anchor="start" font-weight="bold" textLength="229" lengthAdjust="spacingAndGlyphs" >缸筒内径110mm，缸杆直径80mm，缸筒外径120mm，行程300mm≥100+50=150mm；</text>
<text x="161" y="345.9" font-size="9" fill="#00ff00" text-anchor="start" font-weight="bold" textLength="6" lengthAdjust="spacingAndGlyphs" >2、</text>
<text x="173.5" y="345.9" font-size="9" fill="#00ff00" text-anchor="start" font-weight="bold" textLength="90" lengthAdjust="spacingAndGlyphs" >装配前各件须严格清洗，去刺；</text>
<text x="161" y="358.3" font-size="9" fill="#00ff00" text-anchor="start" font-weight="bold" textLength="6" lengthAdjust="spacingAndGlyphs" >3、</text>
<text x="173.5" y="358.3" font-size="9" fill="#00ff00" text-anchor="start" font-weight="bold" textLength="310" lengthAdjust="spacingAndGlyphs" >实验按JB/JQ20301-88进行，用压或拉得减起的活塞停留在行程两端，装配后实验后油口加堵保护；</text>
<text x="161" y="370.7" font-size="9" fill="#00ff00" text-anchor="start" font-weight="bold" textLength="6" lengthAdjust="spacingAndGlyphs" >4、</text>
<text x="173.5" y="370.7" font-size="9" fill="#00ff00" text-anchor="start" font-weight="bold" textLength="336.5" lengthAdjust="spacingAndGlyphs" >油缸非接触表面，涂底漆铁红C06-1，面漆，1、按GB/T3911-92 表面涂装化底层JB/JQ 20306-88的工厂氧金面层</text>
<text x="161" y="383.5" font-size="9" fill="#00ff00" text-anchor="start" font-weight="bold" textLength="147.5" lengthAdjust="spacingAndGlyphs" >JB/JQ 20302-88，质量检验JB/JQ 20303-88。</text>
</svg>
</body></html>
